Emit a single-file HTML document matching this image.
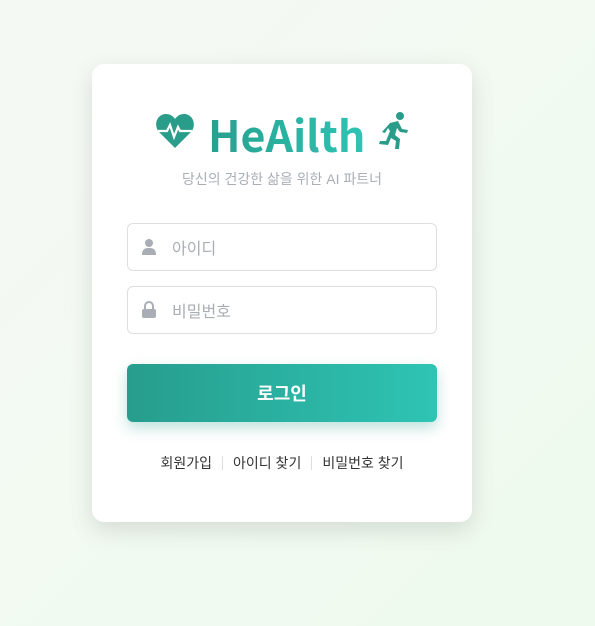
<!DOCTYPE html>
<html><head><meta charset="utf-8"><style>
body{margin:0;width:595px;height:626px;background:linear-gradient(135deg,#f5f9f4,#eefaee);font-family:"Liberation Sans","Noto Sans CJK KR",sans-serif;position:relative;overflow:hidden}
.card{position:absolute;left:92px;top:64px;width:380px;height:458px;background:#fff;border-radius:12px;box-shadow:0 8px 24px rgba(0,0,0,.12)}
.title{position:absolute;left:208px;top:106px;font-size:43px;font-weight:bold;line-height:56px;font-family:"Noto Sans CJK KR",sans-serif;background:linear-gradient(90deg,#26a08e,#2ec4b4);-webkit-background-clip:text;color:transparent;white-space:nowrap}
.sub{position:absolute;left:0;width:564px;top:169px;text-align:center;font-size:14px;color:#a9aeb5}
.inp{position:absolute;left:127px;width:308px;height:46px;border:1px solid #dcdfe2;border-radius:6px;background:#fff}
.inp span{position:absolute;left:44px;top:11px;font-size:16px;color:#a9aeb5}
.btn{position:absolute;left:127px;top:364px;width:310px;height:58px;border-radius:6px;background:linear-gradient(90deg,#279d8d,#2ec4b4);box-shadow:0 6px 14px rgba(40,160,140,.3);color:#fff;font-weight:bold;font-size:18px;text-align:center;line-height:60px}
.links{position:absolute;left:0;width:564px;top:453px;text-align:center;font-size:14px;color:#333}
.links i{display:inline-block;width:1px;height:14px;background:#ddd;margin:0 10px;vertical-align:-2px}
</style></head><body>
<div class="card"></div>
<svg style="position:absolute;left:155px;top:113px" width="40" height="36" viewBox="0 0 40 36"><path d="M20 35 L4 19 C-2 12 2 1 11 1 C15 1 18 3 20 6 C22 3 25 1 29 1 C38 1 42 12 36 19 Z" fill="#2a9d8a"/><path d="M3 18 H12 L15 12 L19 24 L23 14 L25 18 H37" stroke="#fff" stroke-width="2.2" fill="none"/></svg>
<div class="title">HeAilth</div>
<svg style="position:absolute;left:378px;top:111px" width="34" height="40" viewBox="0 0 34 40" fill="#2a9d8a"><circle cx="22" cy="5" r="4"/><path d="M12 12 L20 10 L24 18 L30 19 L29 22 L22 21 L19 17 L17 24 L22 28 L21 38 L17 38 L18 30 L13 27 L10 34 L1 33 L2 30 L8 30 L12 20 L10 17 L7 22 L4 21 Z"/></svg>
<div class="sub">당신의 건강한 삶을 위한 AI 파트너</div>
<div class="inp" style="top:223px"><svg style="position:absolute;left:14px;top:15px" width="14" height="16" viewBox="0 0 14 16" fill="#a9aeb5"><circle cx="7" cy="4" r="4"/><path d="M0 16 C0 10 3 9 7 9 C11 9 14 10 14 16Z"/></svg><span>아이디</span></div>
<div class="inp" style="top:286px"><svg style="position:absolute;left:14px;top:14px" width="14" height="17" viewBox="0 0 14 17" fill="#a9aeb5"><path d="M3 8 V5 a4 4 0 0 1 8 0 V8" stroke="#a9aeb5" stroke-width="2" fill="none"/><rect x="0" y="8" width="14" height="9" rx="2"/></svg><span>비밀번호</span></div>
<div class="btn">로그인</div>
<div class="links">회원가입<i></i>아이디 찾기<i></i>비밀번호 찾기</div>
</body></html>
